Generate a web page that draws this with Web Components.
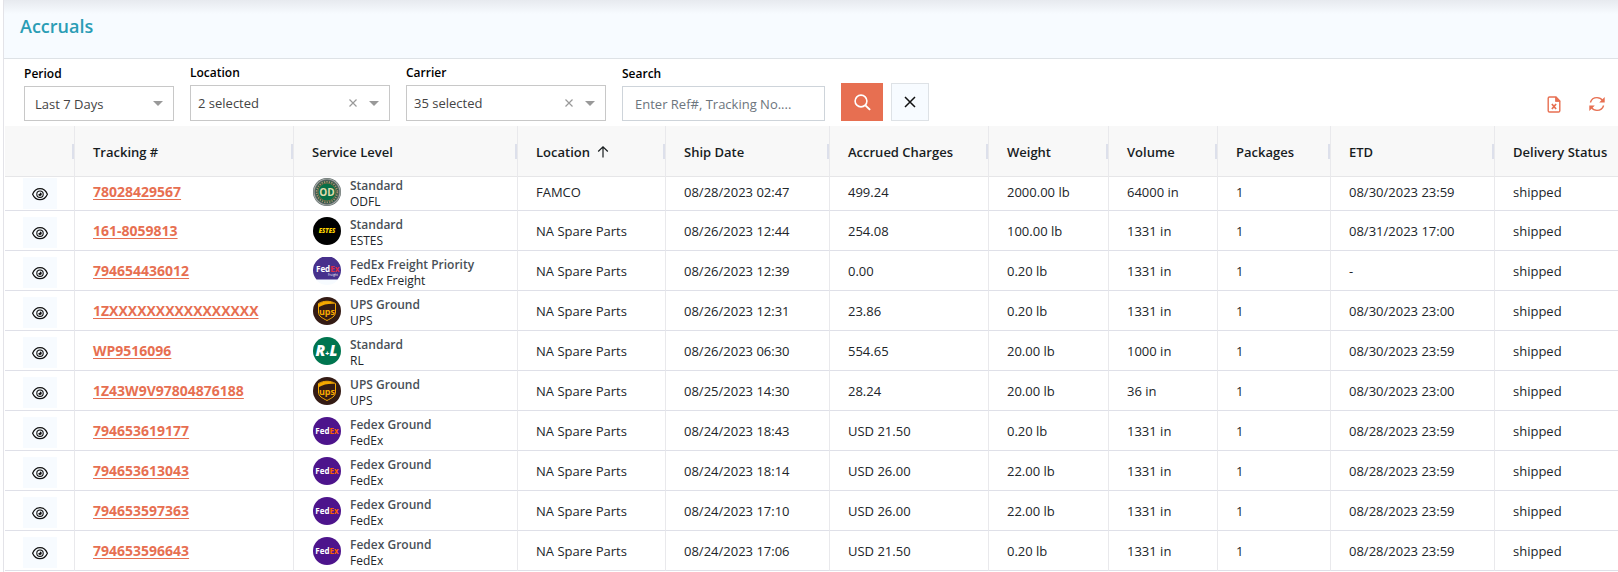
<!DOCTYPE html>
<html lang="en">
<head>
<meta charset="utf-8">
<title>Accruals</title>
<style>
  body {
    margin: 0;
    background: #fff;
    font-family: 'Open Sans', 'Noto Sans', sans-serif;
    font-size: 13px;
    color: #212529;
  }
</style>
</head>
<body>
<accruals-page></accruals-page>

<script>
const ICONS = {
  eye: `<svg viewBox="0 0 16 16" width="16" height="16" fill="none" stroke="currentColor"><path d="M.6 8.200C2 5 4.700 2.700 8 2.700s6 2.300 7.400 5.500C14 11.400 11.300 13.700 8 13.700S2 11.400.6 8.200z" stroke-width="1.200"/><circle cx="8" cy="8.200" r="3.200" stroke-width="1.100"/><path d="M8 6.400a1.800 1.800 0 1 1-1.800 1.800A1.600 1.600 0 0 0 8 6.400z" fill="currentColor" stroke="none"/></svg>`,
  search: `<svg viewBox="0 0 17 17" width="17" height="17" fill="none" stroke="currentColor"><circle cx="7" cy="7" r="5.900" stroke-width="1.600"/><path d="M11.400 11.400l4.700 4.500" stroke-width="2"/></svg>`,
  close: `<svg viewBox="0 0 12 12" width="12" height="12" fill="none" stroke="currentColor" stroke-width="1.500"><path d="M1 1l10 10M11 1L1 11"/></svg>`,
  clear: `<svg viewBox="0 0 8 8" width="8" height="8" fill="none" stroke="currentColor" stroke-width="1.200"><path d="M.5.5l7 7M7.500.5l-7 7"/></svg>`,
  caret: `<svg viewBox="0 0 10 5" width="10" height="5" fill="currentColor"><path d="M0 0h10L5 5z"/></svg>`,
  sort: `<svg viewBox="0 0 12 12" width="12" height="12" fill="none" stroke="currentColor" stroke-width="1.200"><path d="M6 11.500V1M1.200 5.500L6 .9l4.800 4.600"/></svg>`,
  excel: `<svg viewBox="0 0 14 17" width="14" height="17" fill="none" stroke="currentColor" stroke-width="1.400"><path d="M9 1H2.500A1.300 1.300 0 0 0 1.200 2.300v12.400A1.300 1.300 0 0 0 2.500 16h9a1.300 1.300 0 0 0 1.300-1.300V5z"/><path d="M8.500 1v4.500h4.300z" fill="currentColor" stroke-width=".8"/><path d="M4.900 8l4.200 5M9.100 8l-4.200 5" stroke-width="1.700"/></svg>`,
  refresh: `<svg viewBox="0 0 16 16" width="16" height="16" fill="none" stroke="currentColor" stroke-width="1.400"><path d="M1.400 6.500C2.300 3.500 5 1.600 8 1.600c2.400 0 4.400 1.100 5.700 3M14.600 9.500c-.9 3-3.600 4.900-6.600 4.900-2.400 0-4.400-1.100-5.700-3"/><path d="M15.700 1v5.500h-5.500zM.3 15V9.500h5.500z" fill="currentColor" stroke="none"/></svg>`
};

const LOGOS = {
  odfl: `<circle cx="14" cy="14" r="14" fill="#55605f"/><circle cx="14" cy="14" r="13" fill="none" stroke="#a3aaa6" stroke-width="1.200"/><circle cx="14" cy="14" r="11.200" fill="#1c5a41"/><circle cx="14" cy="14" r="10.300" fill="none" stroke="#a58d70" stroke-width="1.600" stroke-dasharray="1.500 1"/><circle cx="14" cy="14" r="9" fill="#087047" stroke="#b0704e" stroke-width=".6"/><text x="14" y="17.500" font-size="10" text-anchor="middle" fill="#e3dcae">OD</text>`,
  estes: `<circle cx="14" cy="14" r="14" fill="#000"/><text x="14" y="16.300" font-size="6" font-style="italic" font-weight="800" text-anchor="middle" fill="#ffd500">ESTES</text>`,
  freight: `<circle cx="14" cy="14" r="14" fill="#f7fbff"/><path d="M3.500 22.500A14 14 0 1 1 24.500 22.500z" fill="#47308c"/><text x="3" y="15" font-size="8" fill="#fff">Fed<tspan fill="#e02b45">Ex</tspan></text><text x="15" y="19" font-size="3" font-weight="400" fill="#fff">Freight</text>`,
  ups: `<circle cx="14" cy="14" r="14" fill="#341b14"/><path d="M5.500 6.500C11 3.500 17 3.500 22.500 6.500V15c0 4.500-4 6-8.500 8.500C9.500 21 5.500 19.500 5.500 15z" fill="none" stroke="#f5a800" stroke-width="1"/><path d="M6 6.800C11 3.800 17 3.800 22 6.800 16 6.300 10 7.500 6 10z" fill="#f5a800"/><text x="14" y="17.500" font-size="9" text-anchor="middle" fill="#f5a800">ups</text>`,
  rl: `<circle cx="14" cy="14" r="14" fill="#00754f"/><text x="13.500" y="19" font-size="15" font-style="italic" font-weight="800" text-anchor="middle" fill="#fff">R<tspan font-size="7">+</tspan>L</text>`,
  fedex: `<circle cx="14" cy="14" r="14" fill="#4d148c"/><text x="14" y="17" font-size="8" text-anchor="middle" fill="#fff">Fed<tspan fill="#ff6200">Ex</tspan></text>`
};

const COLUMNS = ['', 'Tracking #', 'Service Level', 'Location', 'Ship Date', 'Accrued Charges', 'Weight', 'Volume', 'Packages', 'ETD', 'Delivery Status'];

const ROWS = [
  ['78028429567', 'odfl', 'Standard', 'ODFL', 'FAMCO', '08/28/2023 02:47', '499.24', '2000.00 lb', '64000 in', '1', '08/30/2023 23:59', 'shipped'],
  ['161-8059813', 'estes', 'Standard', 'ESTES', 'NA Spare Parts', '08/26/2023 12:44', '254.08', '100.00 lb', '1331 in', '1', '08/31/2023 17:00', 'shipped'],
  ['794654436012', 'freight', 'FedEx Freight Priority', 'FedEx Freight', 'NA Spare Parts', '08/26/2023 12:39', '0.00', '0.20 lb', '1331 in', '1', '-', 'shipped'],
  ['1ZXXXXXXXXXXXXXXXX', 'ups', 'UPS Ground', 'UPS', 'NA Spare Parts', '08/26/2023 12:31', '23.86', '0.20 lb', '1331 in', '1', '08/30/2023 23:00', 'shipped'],
  ['WP9516096', 'rl', 'Standard', 'RL', 'NA Spare Parts', '08/26/2023 06:30', '554.65', '20.00 lb', '1000 in', '1', '08/30/2023 23:59', 'shipped'],
  ['1Z43W9V97804876188', 'ups', 'UPS Ground', 'UPS', 'NA Spare Parts', '08/25/2023 14:30', '28.24', '20.00 lb', '36 in', '1', '08/30/2023 23:00', 'shipped'],
  ['794653619177', 'fedex', 'Fedex Ground', 'FedEx', 'NA Spare Parts', '08/24/2023 18:43', 'USD 21.50', '0.20 lb', '1331 in', '1', '08/28/2023 23:59', 'shipped'],
  ['794653613043', 'fedex', 'Fedex Ground', 'FedEx', 'NA Spare Parts', '08/24/2023 18:14', 'USD 26.00', '22.00 lb', '1331 in', '1', '08/28/2023 23:59', 'shipped'],
  ['794653597363', 'fedex', 'Fedex Ground', 'FedEx', 'NA Spare Parts', '08/24/2023 17:10', 'USD 26.00', '22.00 lb', '1331 in', '1', '08/28/2023 23:59', 'shipped'],
  ['794653596643', 'fedex', 'Fedex Ground', 'FedEx', 'NA Spare Parts', '08/24/2023 17:06', 'USD 21.50', '0.20 lb', '1331 in', '1', '08/28/2023 23:59', 'shipped']
];

class AppIcon extends HTMLElement {
  constructor() {
    super();
    this.attachShadow({ mode: 'open' });
  }

  connectedCallback() {
    this.shadowRoot.innerHTML = `
      <style>
        :host { display: inline-flex; }
        svg { display: block; }
      </style>
      ${ICONS[this.getAttribute('name')]}
    `;
  }
}
customElements.define('app-icon', AppIcon);

class CarrierLogo extends HTMLElement {
  constructor() {
    super();
    this.attachShadow({ mode: 'open' });
  }

  connectedCallback() {
    this.shadowRoot.innerHTML = `
      <style>
        :host { display: block; flex: none; }
        svg { display: block; font-family: 'Open Sans', sans-serif; font-weight: 700; }
      </style>
      <svg viewBox="0 0 28 28" width="28" height="28">${LOGOS[this.getAttribute('carrier')]}</svg>
    `;
  }
}
customElements.define('carrier-logo', CarrierLogo);

class IconButton extends HTMLElement {
  constructor() {
    super();
    this.attachShadow({ mode: 'open' });
  }

  connectedCallback() {
    this.shadowRoot.innerHTML = `
      <style>
        :host { display: block; }
        button {
          display: flex;
          align-items: center;
          justify-content: center;
          box-sizing: border-box;
          width: 100%;
          height: 100%;
          padding: 0;
          border: 0;
          background: none;
          color: #111;
          cursor: pointer;
        }
        :host([variant="primary"]) button { background: #e76f51; color: #fff; }
        :host([variant="light"]) button { background: #f7fbff; border: 1px solid #dee2e6; }
        :host([variant="row"]) button { background: #f7fbff; }
        :host([variant="accent"]) button { color: #e76f51; }
      </style>
      <button type="button" aria-label="${this.getAttribute('label')}"><app-icon name="${this.getAttribute('icon')}"></app-icon></button>
    `;
  }
}
customElements.define('icon-button', IconButton);

class FilterSelect extends HTMLElement {
  constructor() {
    super();
    this.attachShadow({ mode: 'open' });
  }

  connectedCallback() {
    const clearable = this.hasAttribute('clearable');
    this.shadowRoot.innerHTML = `
      <style>
        :host { display: flex; flex-direction: column; width: 150px; --pad: 10px; --height: 35px; }
        :host([clearable]) { width: 200px; --pad: 7px; --height: 36px; }
        label { font-size: 12px; font-weight: 600; line-height: 16px; margin-bottom: 4px; color: #000; }
        .box {
          display: flex;
          align-items: center;
          gap: 12px;
          box-sizing: border-box;
          height: var(--height);
          padding: 0 10px 0 var(--pad);
          border: 1px solid #c8c8c8;
          color: #999;
        }
        select {
          flex: 1;
          min-width: 0;
          appearance: none;
          border: 0;
          padding: 0;
          background: none;
          font: inherit;
          color: #444;
        }
        button { display: flex; border: 0; padding: 0; background: none; color: #999; }
      </style>
      <label for="field">${this.getAttribute('label')}</label>
      <div class="box">
        <select id="field"><option>${this.getAttribute('value')}</option></select>
        ${clearable ? '<button type="button" aria-label="Clear"><app-icon name="clear"></app-icon></button>' : ''}
        <app-icon name="caret"></app-icon>
      </div>
    `;
  }
}
customElements.define('filter-select', FilterSelect);

class FilterInput extends HTMLElement {
  constructor() {
    super();
    this.attachShadow({ mode: 'open' });
  }

  connectedCallback() {
    this.shadowRoot.innerHTML = `
      <style>
        :host { display: flex; flex-direction: column; width: 203px; }
        label { font-size: 12px; font-weight: 600; line-height: 16px; margin-bottom: 4px; color: #000; }
        input {
          box-sizing: border-box;
          width: 100%;
          height: 35px;
          padding: 0 12px;
          border: 1px solid #ced4da;
          font: inherit;
          color: #444;
        }
        input::placeholder { color: #6c757d; }
      </style>
      <label for="field">${this.getAttribute('label')}</label>
      <input id="field" type="text" placeholder="${this.getAttribute('placeholder')}">
    `;
  }
}
customElements.define('filter-input', FilterInput);

class FilterBar extends HTMLElement {
  constructor() {
    super();
    this.attachShadow({ mode: 'open' });
    this.shadowRoot.innerHTML = `
      <style>
        :host { display: flex; align-items: flex-end; gap: 16px; padding: 6px 8px 5px 20px; }
        .buttons { display: flex; gap: 8px; }
        .buttons icon-button { width: 38px; height: 38px; }
        .buttons icon-button[variant="primary"] { width: 42px; }
        .tools { display: flex; gap: 17px; margin-left: auto; }
        .tools icon-button { width: 26px; height: 34px; }
      </style>
      <filter-select label="Period" value="Last 7 Days"></filter-select>
      <filter-select label="Location" value="2 selected" clearable></filter-select>
      <filter-select label="Carrier" value="35 selected" clearable></filter-select>
      <filter-input label="Search" placeholder="Enter Ref#, Tracking No...."></filter-input>
      <div class="buttons">
        <icon-button variant="primary" icon="search" label="Search"></icon-button>
        <icon-button variant="light" icon="close" label="Reset"></icon-button>
      </div>
      <div class="tools">
        <icon-button variant="accent" icon="excel" label="Export"></icon-button>
        <icon-button variant="accent" icon="refresh" label="Refresh"></icon-button>
      </div>
    `;
  }
}
customElements.define('filter-bar', FilterBar);

class ServiceLevel extends HTMLElement {
  constructor() {
    super();
    this.attachShadow({ mode: 'open' });
  }

  connectedCallback() {
    this.shadowRoot.innerHTML = `
      <style>
        :host { display: flex; gap: 9px; padding-left: 1px; }
        .names { font-size: 12px; line-height: 16px; }
        .level { font-weight: 600; color: #495057; }
      </style>
      <carrier-logo carrier="${this.getAttribute('carrier')}"></carrier-logo>
      <div class="names">
        <div class="level">${this.getAttribute('level')}</div>
        <slot></slot>
      </div>
    `;
  }
}
customElements.define('service-level', ServiceLevel);

class AccrualsTable extends HTMLElement {
  constructor() {
    super();
    this.attachShadow({ mode: 'open' });
    this.shadowRoot.innerHTML = `
      <style>
        :host { display: block; overflow: hidden; margin-left: 1px; }
        table { width: 100%; table-layout: fixed; border-collapse: separate; border-spacing: 0; }
        th, td {
          box-sizing: border-box;
          padding: 0 0 0 18px;
          border-right: 1px solid #e9e9ec;
          text-align: left;
          white-space: nowrap;
        }
        th:last-child, td:last-child { border-right: 0; }
        th { height: 51px; padding-top: 1px; background: #f8f8f8; border-bottom: 1px solid #e6e6e8; font-weight: 600; color: #181d1f; }
        .head { display: flex; align-items: center; gap: 7px; }
        .handle { width: 2px; height: 15px; margin-left: auto; background: #dde0eb; }
        td { height: 40px; border-bottom: 1px solid #dfe0e8; vertical-align: top; line-height: 28px; padding-top: 6px; }
        tr:first-child td { height: 34px; padding-top: 1px; }
        a { font-size: 14px; font-weight: 700; color: #e76f51; text-underline-offset: 2px; }
        service-level { height: 28px; }
        icon-button { width: 34px; height: 31px; }
      </style>
      <table>
        <colgroup>
          ${[70, 219, 224, 148, 164, 159, 120, 109, 113, 164].map(w => `<col style="width: ${w}px">`).join('')}
          <col>
        </colgroup>
        <thead>
          <tr>${COLUMNS.map((name, i) => this._header(name, i)).join('')}</tr>
        </thead>
        <tbody>${ROWS.map(row => this._row(row)).join('')}</tbody>
      </table>
    `;
  }

  _header(name, index) {
    const sort = name === 'Location' ? '<app-icon name="sort"></app-icon>' : '';
    const handle = index < COLUMNS.length - 1 ? '<span class="handle"></span>' : '';
    return `<th scope="col"><div class="head">${name}${sort}${handle}</div></th>`;
  }

  _row([tracking, carrier, level, name, ...rest]) {
    return `
      <tr>
        <td><icon-button variant="row" icon="eye" label="View"></icon-button></td>
        <td><a href="#">${tracking}</a></td>
        <td><service-level carrier="${carrier}" level="${level}">${name}</service-level></td>
        ${rest.map(value => `<td>${value}</td>`).join('')}
      </tr>
    `;
  }
}
customElements.define('accruals-table', AccrualsTable);

class AccrualsPage extends HTMLElement {
  constructor() {
    super();
    this.attachShadow({ mode: 'open' });
    this.shadowRoot.innerHTML = `
      <style>
        :host { display: block; box-sizing: border-box; min-height: 100vh; margin-left: 3px; border-left: 1px solid #e3e3e8; }
        header {
          box-sizing: border-box;
          height: 59px;
          padding: 12px 16px;
          border-bottom: 1px solid #dee2e6;
          background: linear-gradient(#e7eaef, #f7fbff 14px);
        }
        h1 { margin: 0; font-size: 18px; line-height: 28px; font-weight: 600; color: #2a9db5; }
      </style>
      <header><h1>Accruals</h1></header>
      <main>
        <filter-bar></filter-bar>
        <accruals-table></accruals-table>
      </main>
    `;
  }
}
customElements.define('accruals-page', AccrualsPage);
</script>
</body>
</html>
